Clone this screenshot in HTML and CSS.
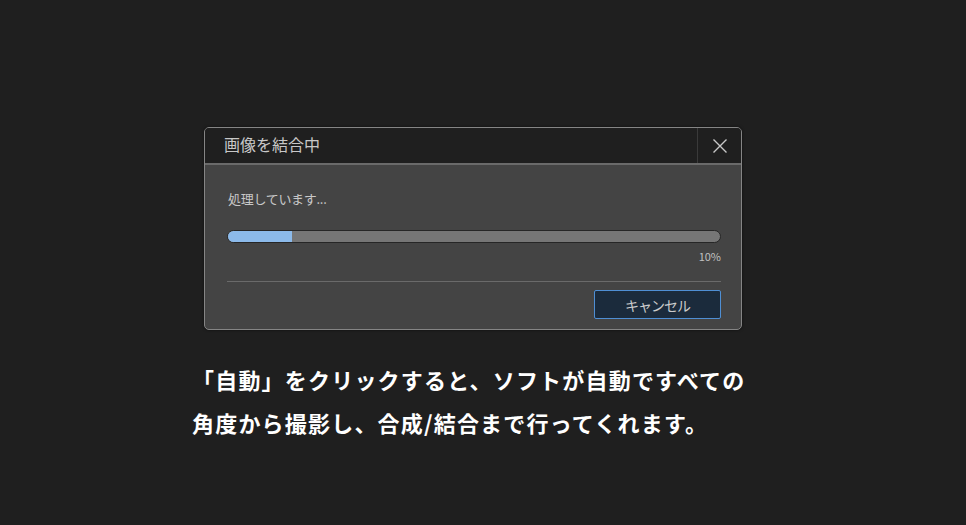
FILE: index.html
```html
<!DOCTYPE html>
<html lang="ja">
<head>
<meta charset="utf-8">
<link rel="stylesheet" href="styles.css">
</head>
<body>
<div class="page">
  <div class="dialog">
    <div class="titlebar">
      <div class="title">画像を結合中</div>
      <div class="close">
        <svg width="16" height="16" viewBox="0 0 16 16"><path d="M1.5 1.5 L14.5 14.5 M14.5 1.5 L1.5 14.5" stroke="#c8c8c8" stroke-width="1.4" fill="none"/></svg>
      </div>
    </div>
    <div class="body">
      <div class="status">処理しています...</div>
      <div class="track"><div class="fill" style="width:13%"></div></div>
      <div class="percent">10%</div>
      <div class="rule"></div>
      <div class="actions"><button class="cancel">キャンセル</button></div>
    </div>
  </div>
  <p class="caption">「自動」をクリックすると、ソフトが自動ですべての<br>角度から撮影し、合成/結合まで行ってくれます。</p>
</div>
</body>
</html>
```

FILE: styles.css
```css
html, body {
  margin: 0;
  padding: 0;
  background: #1f1f1f;
}
body {
  width: 966px;
  height: 525px;
  overflow: hidden;
  font-family: "Noto Sans CJK JP", "Noto Sans", sans-serif;
}
.page {
  display: flex;
  flex-direction: column;
  padding-top: 127px;
}
.dialog {
  margin-left: 204px;
  width: 536px;
  border: 1px solid #858585;
  border-radius: 5px;
  overflow: hidden;
  background: #444444;
  box-shadow: 0 0 3px rgba(0,0,0,0.6);
}
.titlebar {
  display: flex;
  height: 35px;
  background: #1f1f1f;
  border-bottom: 2px solid #6a6a6a;
}
.title {
  flex: 1;
  padding-left: 19px;
  line-height: 33px;
  font-size: 16px;
  color: #c8c8c8;
}
.close {
  width: 43px;
  border-left: 1px solid #3a3a3a;
  display: flex;
  align-items: center;
  justify-content: center;
}
.body {
  padding: 24px 20px 10px 22px;
  display: flex;
  flex-direction: column;
}
.status {
  font-size: 13px;
  color: #c8c8c8;
  line-height: 20px;
  padding-left: 1px;
  letter-spacing: -0.3px;
}
.track {
  margin-top: 21px;
  height: 11px;
  border: 1px solid #262626;
  border-radius: 7px;
  background: #767676;
  overflow: hidden;
}
.fill {
  height: 100%;
  background: #8cbaea;
}
.percent {
  text-align: right;
  font-size: 11px;
  color: #c0c0c0;
  line-height: 16px;
  margin-top: 5px;
}
.rule {
  margin-top: 17px;
  height: 1px;
  background: #6a6a6a;
}
.actions {
  display: flex;
  justify-content: flex-end;
  margin-top: 8px;
}
.cancel {
  width: 127px;
  height: 29px;
  background: #1b2b3c;
  border: 1px solid #4f8fd4;
  border-radius: 2px;
  color: #cccccc;
  font-family: "Noto Sans CJK JP", sans-serif;
  font-size: 14px;
  letter-spacing: -1px;
  padding: 0;
}
.caption {
  margin: 28px 0 0 192px;
  font-size: 22px;
  font-weight: bold;
  line-height: 43px;
  color: #ffffff;
  letter-spacing: 1.2px;
}
```
